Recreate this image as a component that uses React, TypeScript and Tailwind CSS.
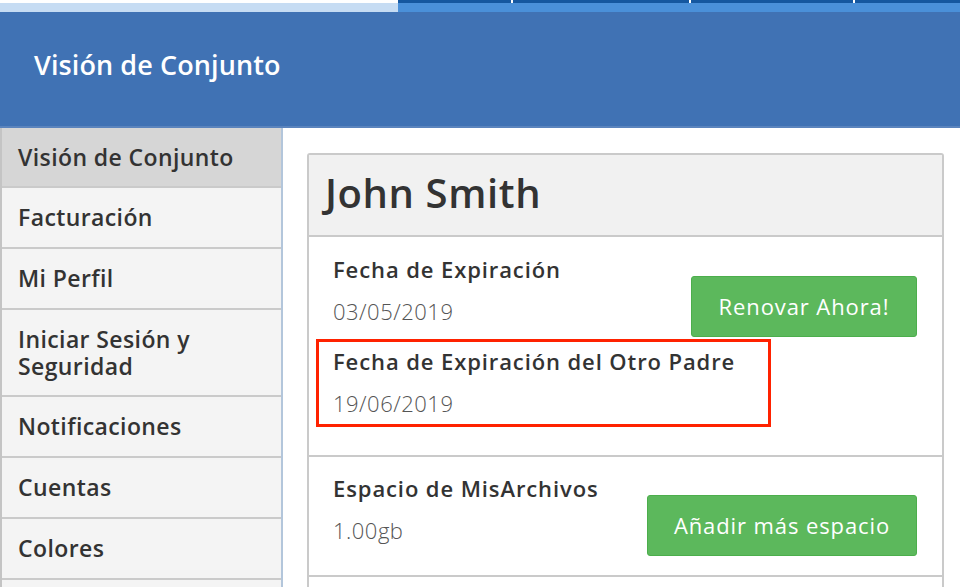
import React from 'react';

const navItems = [
  'Visión de Conjunto',
  'Facturación',
  'Mi Perfil',
  'Iniciar Sesión y Seguridad',
  'Notificaciones',
  'Cuentas',
  'Colores',
  '',
];

function Sidebar() {
  return (
    <nav className="w-[283px] shrink-0 border-l-2 border-r-2 border-l-[#c4c4c4] border-r-[#b3c6db] bg-[#f4f4f4]">
      {navItems.map((item, i) => (
        <div
          key={i}
          className={
            i === 0
              ? 'flex h-[60px] items-center border-b-2 border-[#cacaca] bg-[#d6d6d6] pl-[16px] pr-4 text-[23px] font-semibold leading-[27px] tracking-[0.4px] text-[#333]'
              : item.includes(' y ')
                ? 'flex h-[87px] items-center border-b-2 border-[#cacaca] pl-[16px] pr-4 text-[23px] font-semibold leading-[27px] tracking-[0.4px] text-[#333]'
                : 'flex h-[61px] items-center border-b-2 border-[#cacaca] pl-[16px] pr-4 text-[23px] font-semibold leading-[27px] tracking-[0.4px] text-[#333]'
          }
        >
          {item === 'Iniciar Sesión y Seguridad' ? (
            <span>
              Iniciar Sesión y
              <br />
              Seguridad
            </span>
          ) : (
            item
          )}
        </div>
      ))}
    </nav>
  );
}

function Label({ children }: { children: React.ReactNode }) {
  return (
    <div className="whitespace-nowrap text-[22px] font-semibold leading-[26px] tracking-[0.9px] text-[#333]">
      {children}
    </div>
  );
}

function Value({ children }: { children: React.ReactNode }) {
  return (
    <div className="mt-[16px] whitespace-nowrap text-[22px] font-light leading-[26px] tracking-[0.5px] text-[#555]">
      {children}
    </div>
  );
}

function GreenButton({ label, width }: { label: string; width: string }) {
  return (
    <button
      className={`${width} mt-[20px] h-[61px] shrink-0 rounded-[3px] border border-[#4cae4c] bg-[#5cb85c] text-[22px] tracking-[0.9px] text-white`}
    >
      {label}
    </button>
  );
}

export default function App() {
  return (
    <div className="h-[587px] w-[960px] overflow-hidden bg-white font-['Open_Sans',sans-serif]">
      {/* top tab strip */}
      <div className="flex h-[12px]">
        <div className="w-[398px] border-t-[3px] border-white bg-[#c6dcf3]" />
        <div className="flex flex-1 flex-col">
          <div className="flex h-[3px] gap-[2px] bg-white">
            <div className="w-[113px] bg-[#15579f]" />
            <div className="w-[176px] bg-[#15579f]" />
            <div className="w-[162px] bg-[#15579f]" />
            <div className="flex-1 bg-[#15579f]" />
          </div>
          <div className="flex-1 bg-[#4a90d9]" />
        </div>
      </div>

      {/* page header */}
      <header className="flex h-[116px] items-center border-b-2 border-[#5b84bd] bg-[#4072b4] pb-[8px] pl-[34px]">
        <h1 className="text-[27px] font-semibold tracking-[0.1px] text-white">Visión de Conjunto</h1>
      </header>

      <div className="flex">
        <Sidebar />

        <main className="min-w-0 flex-1 pl-[24px] pt-[25px]">
          <div className="w-[637px] rounded-[3px] border-2 border-[#cacaca]">
            <div className="flex h-[82px] items-center border-b-2 border-[#cacaca] bg-[#f1f1f1] pb-[4px] pl-[16px]">
              <h2 className="text-[40px] font-semibold leading-none tracking-[0.6px] text-[#333]">John Smith</h2>
            </div>

            <section className="border-b-2 border-[#cacaca] pb-[28px] pl-[24px] pr-[25px] pt-[19px]">
              <div className="flex items-start justify-between">
                <div className="flex flex-col">
                  <Label>Fecha de Expiración</Label>
                  <Value>03/05/2019</Value>
                </div>
                <GreenButton label="Renovar Ahora!" width="w-[226px]" />
              </div>
              <div className="-ml-[17px] mt-[2px] w-[455px] border-[3px] border-[#ff2200] pb-[8px] pl-[14px] pt-[6px]">
                <Label>Fecha de Expiración del Otro Padre</Label>
                <div className="mt-[1px]">
                  <Value>19/06/2019</Value>
                </div>
              </div>
            </section>

            <section className="flex items-start justify-between border-b-2 border-[#cacaca] pb-[19px] pl-[24px] pr-[25px] pt-[18px]">
              <div className="flex flex-col">
                <Label>Espacio de MisArchivos</Label>
                <Value>1.00gb</Value>
              </div>
              <GreenButton label="Añadir más espacio" width="w-[270px]" />
            </section>
            <div className="h-[40px]" />
          </div>
        </main>
      </div>
    </div>
  );
}
